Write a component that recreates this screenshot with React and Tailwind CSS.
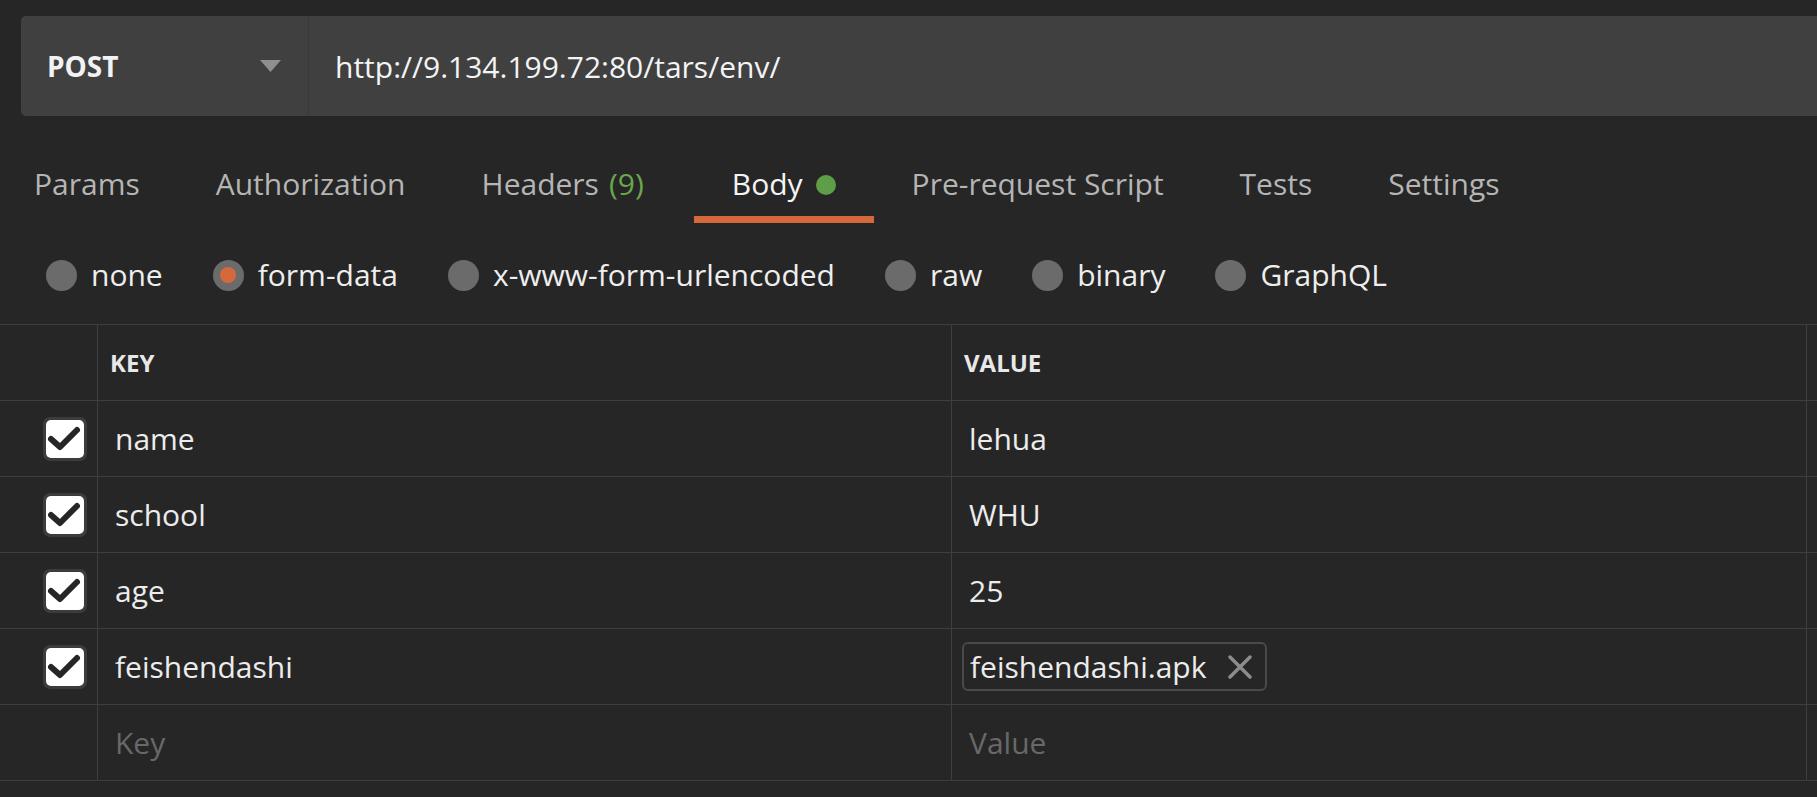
import { useState } from "react";

const tabs = [
  { label: "Params" },
  { label: "Authorization" },
  { label: "Headers", count: "(9)" },
  { label: "Body", active: true, dot: true },
  { label: "Pre-request Script" },
  { label: "Tests" },
  { label: "Settings" },
];

const bodyTypes = ["none", "form-data", "x-www-form-urlencoded", "raw", "binary", "GraphQL"];

const rows = [
  { key: "name", value: "lehua" },
  { key: "school", value: "WHU" },
  { key: "age", value: "25" },
  { key: "feishendashi", file: "feishendashi.apk" },
];

function Checkbox() {
  return (
    <div className="w-[44px] h-[44px] rounded-[7px] bg-[#3c3c3c] p-[3px]">
      <div className="w-full h-full rounded-[5px] bg-white flex items-center justify-center">
        <svg width="38" height="38" viewBox="0 0 38 38">
          <path d="M5 19 L14 27 L31 10" fill="none" stroke="#262626" strokeWidth="6" strokeLinecap="round" strokeLinejoin="round" />
        </svg>
      </div>
    </div>
  );
}

function Radio({ checked }) {
  return (
    <div className="w-[31px] h-[31px] rounded-full bg-[#6b6b6b] flex items-center justify-center shrink-0">
      {checked && <div className="w-[16px] h-[16px] rounded-full bg-[#d5693b]" />}
    </div>
  );
}

export default function App() {
  const [bodyType, setBodyType] = useState("form-data");

  return (
    <div className="w-full h-[797px] bg-[#262626] overflow-hidden text-[#ececec]" style={{ fontFamily: '"Open Sans", sans-serif' }}>
      {/* URL BAR */}
      <div className="flex h-[100px] mt-[16px] ml-[21px] bg-[#404040] rounded-l-[5px]">
        <div className="w-[288px] flex items-center justify-between pl-[26px] pr-[27px] border-r border-[#383838]">
          <span className="text-[28px] font-bold text-[#f2f2f2]">POST</span>
          <svg width="21" height="12" viewBox="0 0 21 12">
            <path d="M0 0 H21 L10.5 12 Z" fill="#8f8f8f" />
          </svg>
        </div>
        <div className="flex items-center pl-[26px] text-[30px] text-[#f4f4f4]">http://9.134.199.72:80/tars/env/</div>
      </div>

      {/* TABS */}
      <div className="flex ml-[-4px]">
        {tabs.map((t) => (
          <div key={t.label} className={`flex flex-col ${t.active ? "ml-[12px]" : ""}`}>
            <div className={`px-[38px] pt-[48px] h-[88px] flex items-start text-[30px] leading-[40px] ${t.active ? "text-[#f4f4f4]" : "text-[#b5b5b5]"}`}>
              <span>{t.label}</span>
              {t.count && <span className="ml-[10px] text-[#68a84a]">{t.count}</span>}
              {t.dot && <span className="ml-[13px] mt-[11px] w-[20px] h-[20px] rounded-full bg-[#5f9e48]" />}
            </div>
            <div className={`h-[7px] mt-[12px] ${t.active ? "bg-[#d5693b]" : ""}`} />
          </div>
        ))}
      </div>

      {/* BODY TYPES */}
      <div className="flex items-center h-[40px] mt-[32px] pl-[46px] gap-[50px]">
        {bodyTypes.map((b) => (
          <div key={b} className="flex items-center gap-[14px] cursor-pointer" onClick={() => setBodyType(b)}>
            <Radio checked={bodyType === b} />
            <span className="text-[30px] leading-[40px] text-[#eeeeee]">{b}</span>
          </div>
        ))}
      </div>

      {/* TABLE */}
      <div className="mt-[29px] border-t border-[#3e3e3e]">
        <div className="flex h-[76px] border-b border-[#3e3e3e]">
          <div className="w-[98px] border-r border-[#3e3e3e]" />
          <div className="w-[854px] border-r border-[#3e3e3e] flex items-center pl-[12px] text-[24px] font-bold text-[#e8e8e8]">KEY</div>
          <div className="w-[855px] border-r border-[#3e3e3e] flex items-center pl-[12px] text-[24px] font-bold text-[#e8e8e8]">VALUE</div>
          <div className="flex-1" />
        </div>
        {rows.map((r) => (
          <div key={r.key} className="flex h-[76px] border-b border-[#3e3e3e]">
            <div className="w-[98px] border-r border-[#3e3e3e] flex items-center pl-[43px]">
              <Checkbox />
            </div>
            <div className="w-[854px] border-r border-[#3e3e3e] flex items-center pl-[17px] text-[30px]">{r.key}</div>
            <div className="w-[855px] border-r border-[#3e3e3e] flex items-center pl-[17px] text-[30px]">
              {r.file ? (
                <div className="ml-[-7px] h-[49px] flex items-center pl-[6px] pr-[13px] border-2 border-[#4a4a4a] rounded-[6px]">
                  <span>{r.file}</span>
                  <svg className="ml-[22px]" width="24" height="24" viewBox="0 0 24 24">
                    <path d="M2 2 L22 22 M22 2 L2 22" stroke="#8c8c8c" strokeWidth="3.5" strokeLinecap="round" />
                  </svg>
                </div>
              ) : (
                r.value
              )}
            </div>
            <div className="flex-1" />
          </div>
        ))}
        <div className="flex h-[76px] border-b border-[#3e3e3e]">
          <div className="w-[98px] border-r border-[#3e3e3e]" />
          <div className="w-[854px] border-r border-[#3e3e3e] flex items-center pl-[17px] text-[30px] text-[#686868]">Key</div>
          <div className="w-[855px] border-r border-[#3e3e3e] flex items-center pl-[17px] text-[30px] text-[#686868]">Value</div>
          <div className="flex-1" />
        </div>
      </div>
    </div>
  );
}
